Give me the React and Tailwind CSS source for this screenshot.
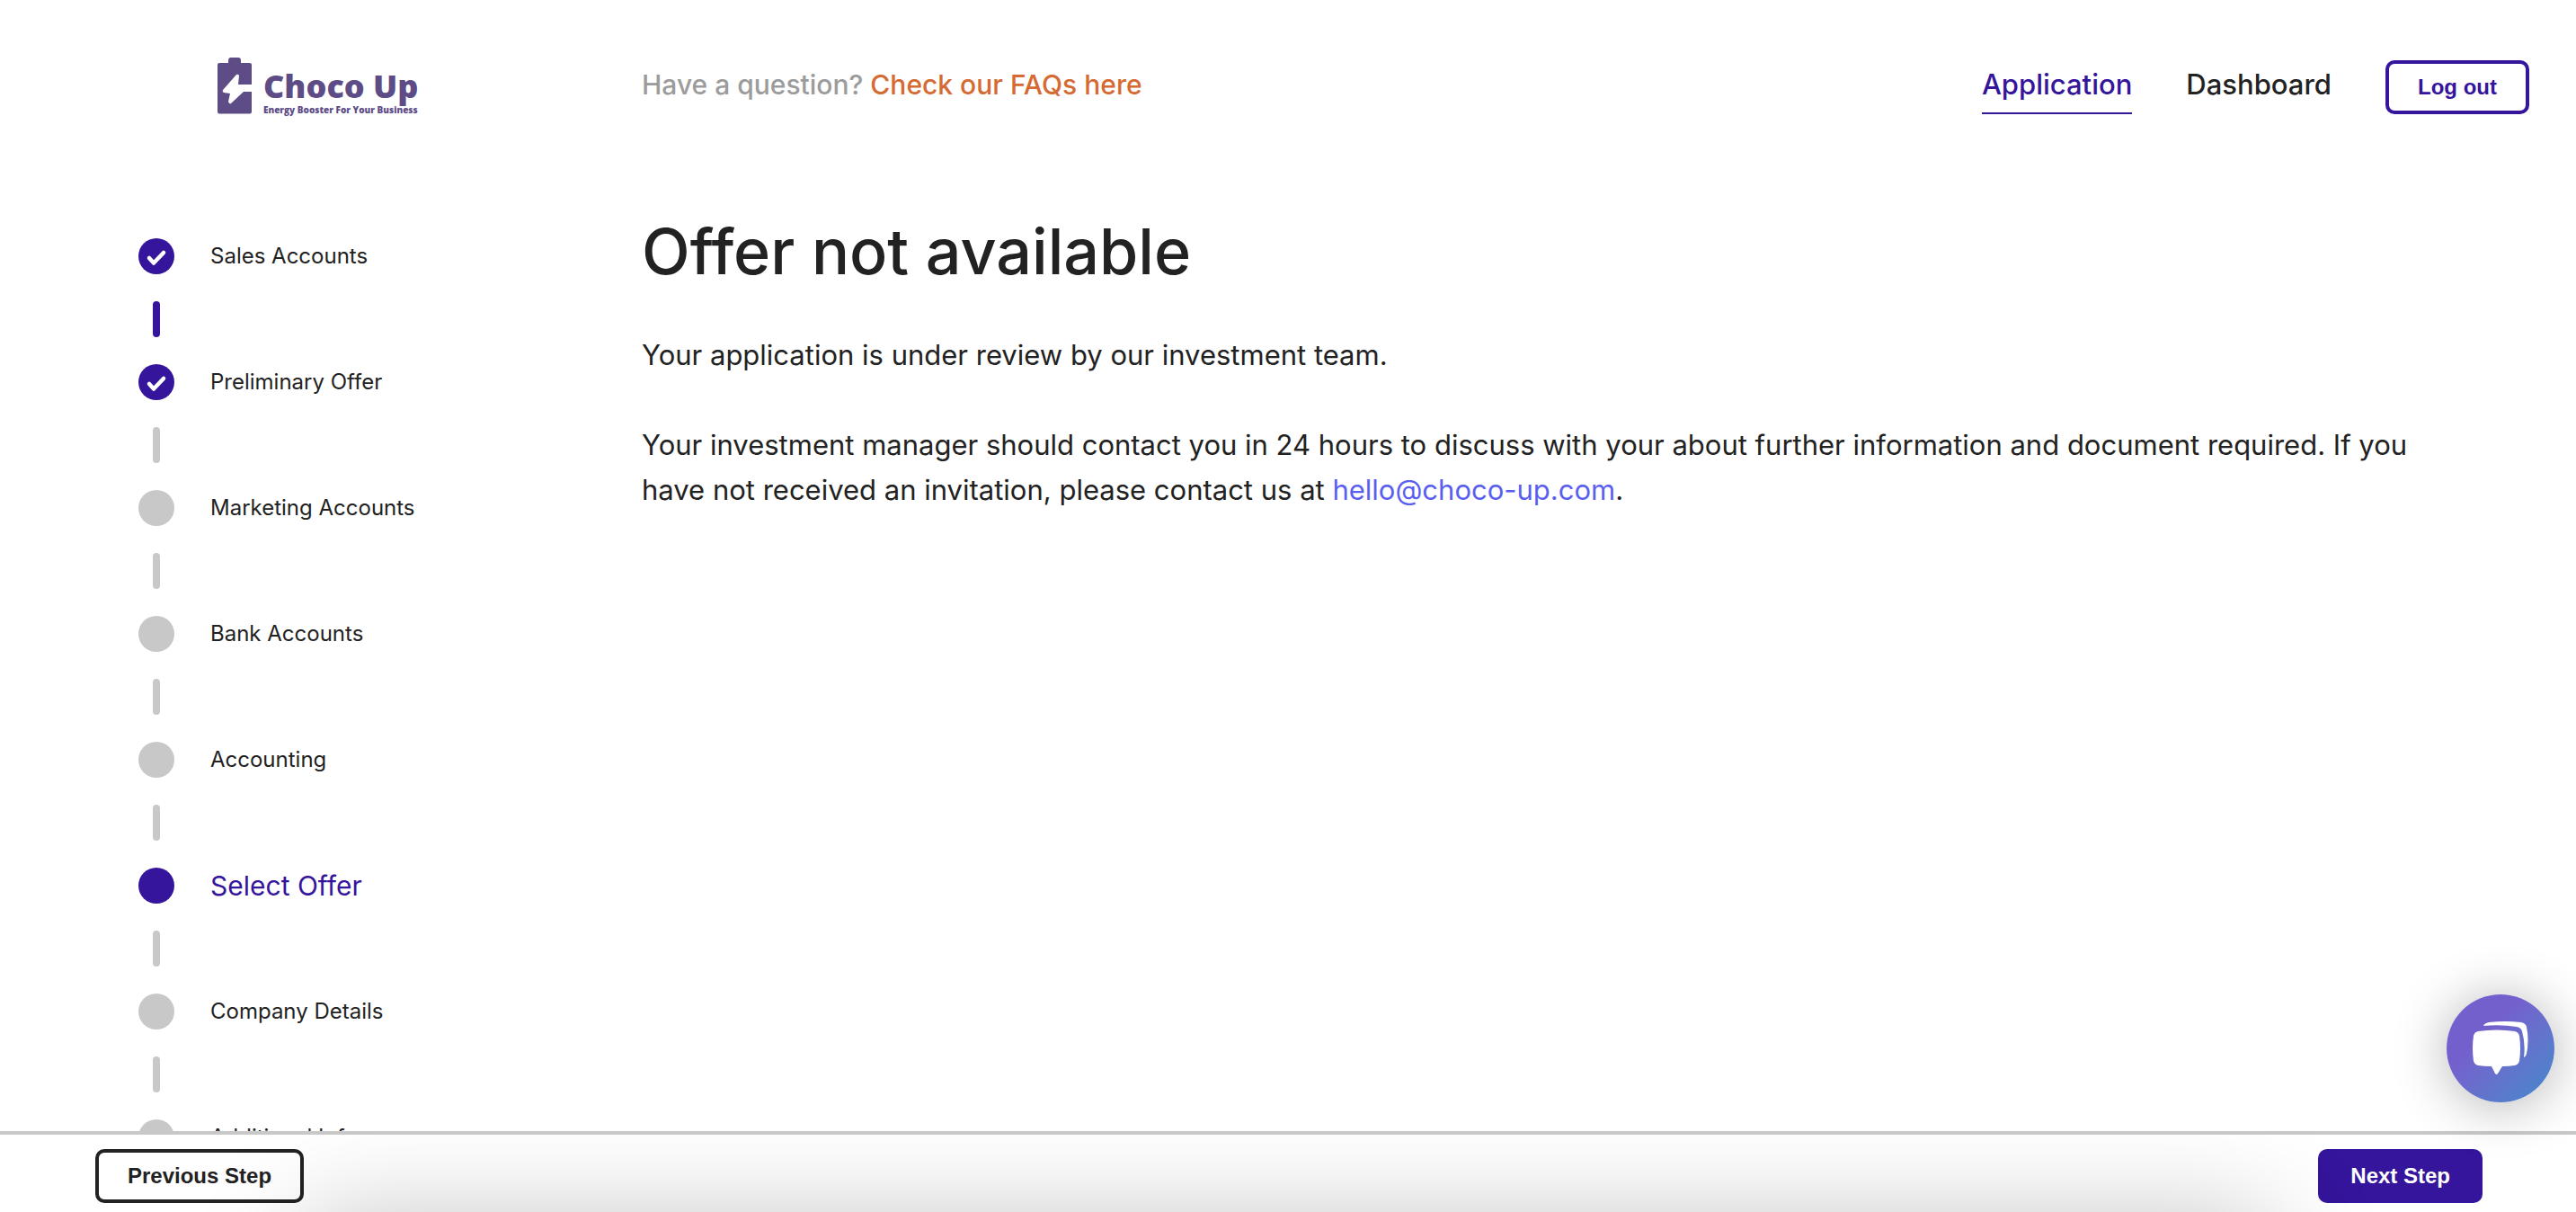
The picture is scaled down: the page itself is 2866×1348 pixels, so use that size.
import React from 'react';

const STEPS = [
    { name: 'Sales Accounts', status: 'done', linked: true },
    { name: 'Preliminary Offer', status: 'done' },
    { name: 'Marketing Accounts', status: 'todo' },
    { name: 'Bank Accounts', status: 'todo' },
    { name: 'Accounting', status: 'todo' },
    { name: 'Select Offer', status: 'current' },
    { name: 'Company Details', status: 'todo' },
    { name: 'Additional Info', status: 'todo' },
];

const Logo = () => (
    <a href="#" className="flex gap-3 text-[#5d4c86]">
        <svg width="40" height="64" viewBox="0 0 40 64" fill="currentColor" aria-hidden="true">
            <path d="M13 6V3Q13 0 16 0H24Q27 0 27 3V6H37Q39 6 39 8V30H24L25 20Q24 18 22 19L7 36Q6 38 8 39L15 40L13 49Q14 52 16 51L30 38H39V60Q39 62.500 37 62.500H3Q1 62.500 1 60V8Q1 6 3 6Z" />
        </svg>
        <span className="flex flex-col pt-3 font-['Open_Sans',sans-serif]">
            <span className="text-[36px] leading-[40px] font-extrabold whitespace-nowrap">Choco Up</span>
            <span className="text-[10px] leading-[12px] font-extrabold whitespace-nowrap">Energy Booster For Your Business</span>
        </span>
    </a>
);

const Step = ({ step, isLast }) => {
    const active = step.status !== 'todo';
    return (
        <li className="flex flex-col">
            <div className="flex items-center gap-10">
                <span className={`flex size-10 shrink-0 items-center justify-center rounded-full ${active ? 'bg-[#34159b]' : 'bg-[#c8c8c8]'}`}>
                    {step.status === 'done' && (
                        <svg width="40" height="40" viewBox="0 0 40 40" fill="none" stroke="white" strokeWidth="4.500" strokeLinecap="round" strokeLinejoin="round" aria-hidden="true">
                            <path d="M12 22L17 27.500L28 16" />
                        </svg>
                    )}
                </span>
                <a href="#" className={`leading-10 whitespace-nowrap ${step.status === 'current' ? 'text-[30px] text-[#34159b]' : 'text-2xl'}`}>
                    {step.name}
                </a>
            </div>
            {!isLast && (
                <span className={`mx-4 my-[30px] h-10 w-2 rounded-full ${step.linked ? 'bg-[#34159b]' : 'bg-[#c8c8c8]'}`} />
            )}
        </li>
    );
};

const App = () => {
    return (
        <div className="flex h-screen flex-col overflow-hidden bg-white font-[Inter,sans-serif] text-[#222]">
            <div className="flex min-h-0 flex-1 overflow-hidden">
                <aside className="w-[714px] shrink-0">
                    <div className="pt-16 pl-[241px]">
                        <Logo />
                    </div>
                    <ol className="flex flex-col pt-[137px] pl-[154px]">
                        {STEPS.map((step, i) => (
                            <Step key={step.name} step={step} isLast={i === STEPS.length - 1} />
                        ))}
                    </ol>
                </aside>

                <div className="flex min-w-0 flex-1 flex-col">
                    <header className="flex items-start justify-between pt-[67px] pr-[52px] leading-[54px] font-medium">
                        <p className="text-[30px] text-[#9c9c9c]">
                            Have a question? <a href="#" className="text-[#d56a32]">Check our FAQs here</a>
                        </p>
                        <nav className="flex items-start gap-[60px] text-[31px]">
                            <a href="#" className="border-b-2 border-[#34159b] pb-1 text-[#34159b]">Application</a>
                            <a href="#">Dashboard</a>
                            <button className="h-[60px] rounded-[10px] border-4 border-[#34159b] px-8 font-['Liberation_Sans',Arial,sans-serif] text-2xl font-bold text-[#34159b]">
                                Log out
                            </button>
                        </nav>
                    </header>

                    <main className="pt-[105px] pr-[160px]">
                        <h1 className="text-[70px] leading-[96px] font-medium">Offer not available</h1>
                        <p className="pt-[42px] text-[31px] leading-[50px]">Your application is under review by our investment team.</p>
                        <p className="pt-[50px] text-[31px] leading-[50px]">
                            Your investment manager should contact you in 24 hours to discuss with your about further information and document required. If you have not received an invitation, please contact us at{' '}
                            <a href="mailto:hello@choco-up.com" className="text-[#5b5ff0]">hello@choco-up.com</a>.
                        </p>
                    </main>
                </div>
            </div>

            <footer className="relative flex shrink-0 items-center justify-between overflow-hidden border-t-4 border-[#c8c8c8] pt-4 pr-[104px] pb-[10px] pl-[106px] font-['Liberation_Sans',Arial,sans-serif] text-2xl font-bold">
                <button className="h-[60px] rounded-[10px] border-4 border-[#222] px-8">Previous Step</button>
                <button className="h-[60px] rounded-[10px] bg-[#34159b] px-9 text-white">Next Step</button>
                <div className="pointer-events-none absolute inset-x-[340px] top-full h-40 shadow-[0_10px_120px_rgba(0,0,0,0.25)]" />
            </footer>

            <button aria-label="Open chat" className="fixed right-6 bottom-[122px] flex size-[120px] items-center justify-center rounded-full bg-linear-135 from-[#7460cd] from-35% to-[#4a84cb] to-90% shadow-[0_4px_60px_rgba(0,0,0,0.3)]">
                <svg width="62" height="60" viewBox="0 0 62 60" fill="white" aria-hidden="true">
                    <path d="M6 11Q27 8 47 11Q51 12 52 16Q54 30 52 44Q51 48 47 49Q40 50 33 50L28 58Q26.500 60 25 58L21 50Q13 50 6 49Q2 48 1 44Q-1 30 1 16Q2 12 6 11Z" />
                    <path d="M12 5Q13 2 18 1Q36 -1 54 1Q59 2 60 6Q63 21 60 36Q59 39 57 40Q59 25 55 11Q54 7 49 6Q31 3 12 5Z" />
                </svg>
            </button>
        </div>
    );
};

export default App;
